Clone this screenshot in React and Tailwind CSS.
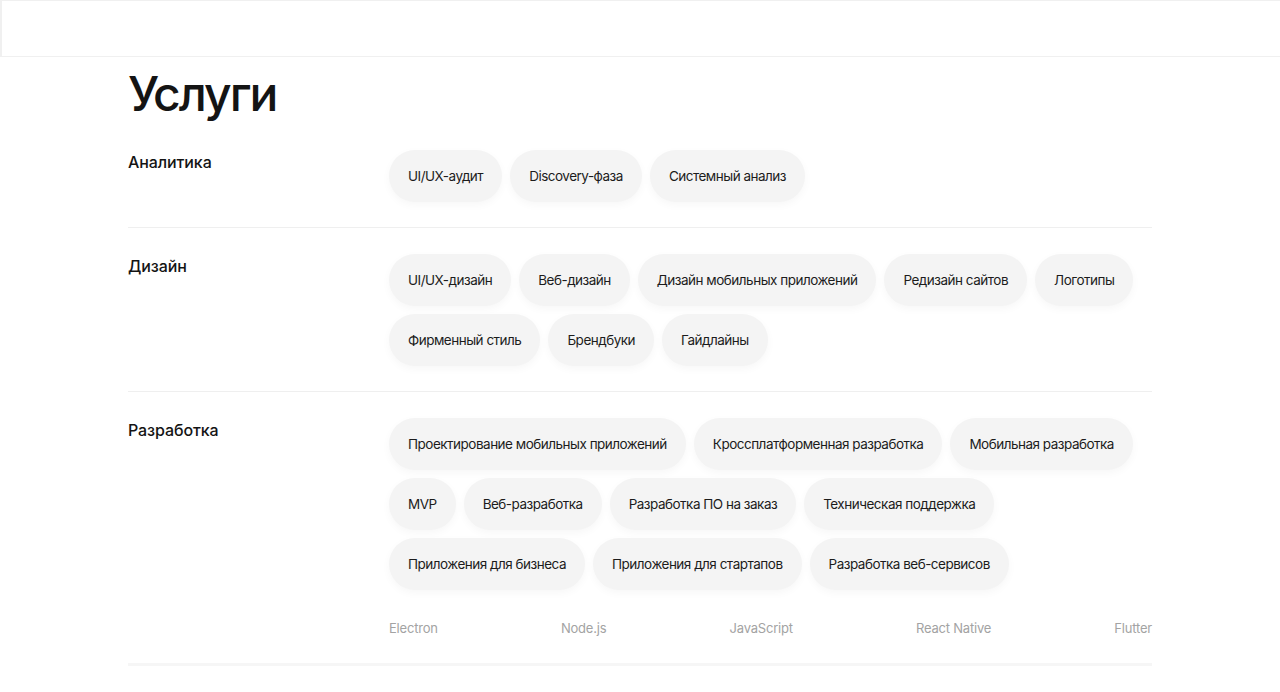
import React from "react";

const sections = [
    { title: "Аналитика", items: ["UI/UX-аудит", "Discovery-фаза", "Системный анализ"] },
    {
        title: "Дизайн",
        items: [
            "UI/UX-дизайн",
            "Веб-дизайн",
            "Дизайн мобильных приложений",
            "Редизайн сайтов",
            "Логотипы",
            "Фирменный стиль",
            "Брендбуки",
            "Гайдлайны",
        ],
    },
    {
        title: "Разработка",
        items: [
            "Проектирование мобильных приложений",
            "Кроссплатформенная разработка",
            "Мобильная разработка",
            "MVP",
            "Веб-разработка",
            "Разработка ПО на заказ",
            "Техническая поддержка",
            "Приложения для бизнеса",
            "Приложения для стартапов",
            "Разработка веб-сервисов",
        ],
        stack: ["Electron", "Node.js", "JavaScript", "React Native", "Flutter"],
    },
];

const Chip = ({ label }) => (
    <span className="flex h-[52px] items-center rounded-full bg-[#f4f4f4] px-[19px] text-[13.5px] tracking-[-0.5px] text-[#1c1c1c] shadow-[0_3px_8px_rgba(0,0,0,0.035)]">
        {label}
    </span>
);

const App = () => {
    return (
        <div className="min-h-[692px] bg-white font-['Inter',sans-serif] text-[#141414]">
            <header className="h-[57px] border-t border-b border-l-2 border-[#f0f0f0]" />

            <main className="mx-auto w-[1024px] pt-[7px]">
                <h1 className="text-[48px] leading-[60px] font-medium tracking-[-2px]">Услуги</h1>

                {sections.map((section, index) => (
                    <section
                        key={section.title}
                        className={`grid grid-cols-[261px_1fr] pt-[26px] pb-[25px] ${
                            index === sections.length - 1 ? "border-b-[3px] border-[#f6f6f6]" : "border-b border-[#efefef]"
                        }`}
                    >
                        <h2 className="text-[16px] leading-6 font-medium tracking-[-0.1px]">{section.title}</h2>
                        <div>
                            <div className="flex flex-wrap gap-2">
                                {section.items.map((item) => (
                                    <Chip key={item} label={item} />
                                ))}
                            </div>
                            {section.stack && (
                                <div className="mt-[28px] flex justify-between text-[13px] leading-5 tracking-[-0.2px] text-[#a3a3a3]">
                                    {section.stack.map((tech) => (
                                        <span key={tech}>{tech}</span>
                                    ))}
                                </div>
                            )}
                        </div>
                    </section>
                ))}
            </main>
        </div>
    );
};

export default App;
